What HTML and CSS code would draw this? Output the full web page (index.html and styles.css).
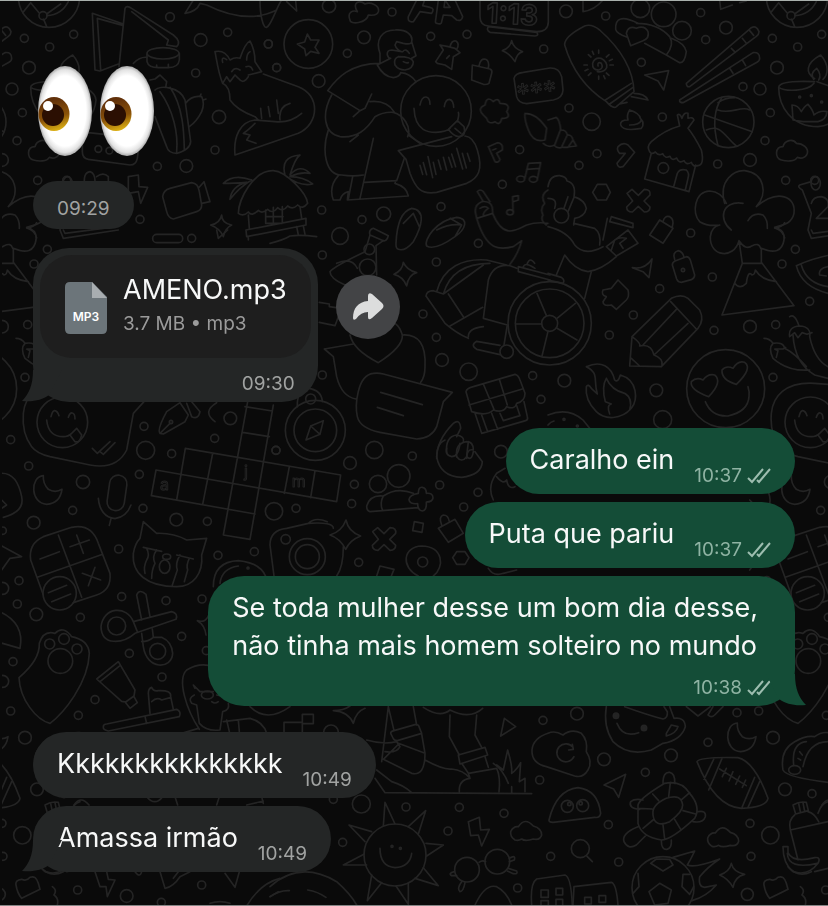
FILE: index.html
```html
<!DOCTYPE html>
<html lang="pt-BR">
<head>
  <meta charset="UTF-8">
  <meta name="viewport" content="width=device-width, initial-scale=1.0">
  <title>Chat</title>
  <link rel="stylesheet" href="styles.css">
</head>
<body>
  <!-- Doodle wallpaper, one 748px wide tile repeated sideways -->
  <svg class="wallpaper" aria-hidden="true">
    <defs>
      <path id="cross" d="M-34-22l15-12 19 18 18-18q20 0 17 17l-18 18 18 18q0 15-17 15l-18-17-18 17q-17 0-17-15l18-18z"/>
      <path id="moon" d="M130 107C90 110 90 190 140 193Q180 190 186 148 165 160 145 148 128 130 130 107z"/>
      <path id="cloud" d="M735 450Q720 440 722 425 730 408 745 410 765 380 790 408 815 415 815 435 810 452 790 447 765 455 755 447 745 453 735 450z"/>
      <g id="tile">
        <!-- ball, paper, lamp, cactus, fox, hut -->
        <g transform="scale(.33333)">
          <circle cx="147" cy="-10" r="92"/><circle cx="129" cy="47" r="12"/>
          <path d="M68 38L92 8l25 30M141 47Q185 45 205 5M131 58l9 22M140 42l42-30"/>
          <circle cx="73" cy="115" r="12"/><circle cx="149" cy="141" r="12"/><circle cx="221" cy="103" r="12"/><circle cx="87" cy="203" r="19"/><circle cx="36" cy="267" r="18"/><circle cx="67" cy="338" r="12"/><circle cx="51" cy="422" r="12"/><circle cx="510" cy="51" r="13"/><circle cx="602" cy="120" r="19"/><circle cx="683" cy="97" r="12"/><circle cx="805" cy="132" r="12"/><circle cx="830" cy="203" r="12"/><circle cx="587" cy="219" r="12"/><circle cx="657" cy="351" r="20"/><circle cx="645" cy="450" r="12"/><circle cx="472" cy="499" r="12"/><circle cx="559" cy="498" r="19"/><circle cx="113" cy="541" r="12"/><circle cx="200" cy="541" r="12"/><circle cx="420" cy="658" r="12"/>
          <path d="M370 72L277 40l8 170 15 3 57-22M368 76l-76-21 10 155M357 200L375 25q5-10 20 0l125 80q25 20 10 35l-30-5M395 35l110 85-5 15M400 190q20-20 40-18"/>
          <ellipse cx="489" cy="160" rx="48" ry="17"/><path d="M441 162v23q4 18 34 18h30q30 0 33-23v-20M470 195v8M505 193v8"/>
          <path d="M200 236C172 220 172 190 218 165 245 195 240 225 225 238M197 238Q185 220 206 205 222 225 212 240M92 262Q95 240 200 245M92 262C92 320 130 380 210 380 260 375 285 340 288 300 285 265 230 255 207 245M92 262C110 275 180 275 198 250M135 360l-3-45q18 0 28 20 10-17 20-22 15 17 18 32 17-15 39-10-2 25-27 30h-45z"/>
          <circle cx="155" cy="291" r="3"/><circle cx="190" cy="287" r="3"/><circle cx="221" cy="306" r="3"/>
          <path d="M100 480C80 475 80 440 105 440 110 420 135 415 145 430 165 430 182 445 178 460 172 478 155 475 148 472 140 485 118 485 100 480z"/>
          <path d="M247 415q3-17 18-17l138 15q15 2 15 15l-6 47q-4 20-22 20l-125-17q-18-3-18-23z"/><circle cx="295" cy="447" r="10"/><circle cx="328" cy="452" r="10"/>
          <path d="M465 270c15-15 75-10 90 30l17 125q-2 25-42 35-25 0-30-20l-35-90M480 275c40 55 55 125 50 180M510 262c40 58 42 138 43 188M557 310q18-25 48-20 10 20 0 45-15 30-37 45M450 240l15-3 15-12 20 20-3 17M600 290l3-8M610 300l8-3"/>
          <path d="M668 250C655 220 650 180 645 155 665 150 680 160 690 180q15-10 30-5 15-45 30-52 15 27 15 62l20 30-40 10M668 250l12-20 10 15 15-20 10 10q15 20 30-5M695 215q10-15 25-5M738 200q15-5 20 10M668 187q-5-20 12-8M740 180q0-20 10-25M668 250q22 10 22 50 20 30 75 50l10 10M785 355l-3-30M810 350l-5-30M835 340l-5-40M790 222l105 38C960 285 960 370 895 400L705 465C700 410 720 365 765 360l60 5Q870 370 905 340M840 360q-5-40 30-50M765 370q-20 20-35 30l20 5-10 15 28 10"/>
          <path d="M385 530l30-5 2 35 26 2-21 48-7-35-30 5zM488 590q2-20 22-25l65-17q20 2 23 27l7 40q0 15-15 20l-70 22q-15-2-20-22zM595 565l17-20 18 60-25 5M665 645q0 25 30 30-20 10-25 35-10-25-38-35 28-5 33-30M110 668q-5 12-30 16 25 7 30 30"/>
          <path d="M755 540q-55-20-85 10 30 0 70-3-45 11-50 51 30-38 65-58M715 640C715 600 760 510 820 512 860 515 920 580 923 610q-15 20-30 5-15 15-30 3-15 20-30 5-15 20-30 5-18 15-28 3-20 20-30 5-15 15-30 4M745 645l3 40M900 620l5 35M738 690l180-35v20l-178 35zM797 630v40h50v-50M820 622v45M797 650h52M890 680l5 25M910 678l5 25M745 710v10M855 525Q840 470 900 465 885 475 870 525 900 490 930 520 900 515 870 530 910 530 938 552 900 560 860 530"/>
          <path d="M255 560q-8-42 15-45 15 5 15 28M290 530q20-15 35 0v12M190 545l-35 10q-8 5 8 15l27 70-10 50 10 25 165-25M190 610q5-20 30-20 25 5 20 30l-35 35h35"/><ellipse cx="203" cy="550" rx="14" ry="20"/>
          <path d="M555 40L580 0M555 40Q590 35 600 10l20 5Q740 75 830 30M780 0c0 50 10 85 20 82 15-7 30-62 45-82"/>
        </g>
        <!-- badge, kneeling man, smiley, voice note -->
        <g transform="translate(270 0) scale(.33333)">
          <circle cx="177" cy="18" r="20"/><circle cx="366" cy="36" r="12"/><circle cx="-5" cy="132" r="12"/><circle cx="20" cy="203" r="12"/><circle cx="232" cy="160" r="12"/><circle cx="282" cy="112" r="19"/><circle cx="482" cy="109" r="12"/><circle cx="591" cy="103" r="12"/><circle cx="146" cy="243" r="19"/><circle cx="821" cy="147" r="12"/><circle cx="749" cy="449" r="12"/><circle cx="697" cy="553" r="12"/><circle cx="155" cy="630" r="12"/><circle cx="276" cy="659" r="12"/><circle cx="341" cy="642" r="21"/><circle cx="513" cy="620" r="12"/><circle cx="210" cy="708" r="25"/>
          <circle cx="115" cy="132" r="73"/><path d="M112 102l10 18 25 0-12 22 12 18-25-6-14 13-4-20-22-15 22-6z"/>
          <path d="M50 5l30 28-3-30M240 60C230 35 250 30 262 35 245 5 270 0 285 12 300 5 330 15 325 35 320 50 300 45 295 45 290 70 240 75 240 60zM415 50L440 0M430 65l20-30 35 5q10-15-5-18l-22-5 5-15M415 50q-3 18 15 15M500 70q-5 0-3-10l8-60M500 70q15 5 15-5l5-20 25 2 15 13q15 5 18-10L555 0M522 22l3-22 15 22z"/>
          <path d="M630 0v50q0 25 25 28l145 17q35 0 35-30V0M655 80l145 17q8 10-5 11l-135-11q-12-7-5-17"/>
          <text class="digits" x="648" y="68" transform="rotate(3 648 68)">1:13</text>
          <path d="M330 190v-30C315 120 335 90 375 90 410 88 430 105 425 125q0 10-25 5l-20-5-5 10q5 15 20 20l-30-5q-15 0-13 15 3 10 10 10l-40 20Q340 230 370 233q20-3 22-15 28 2 46 27M425 125l13 42-13 8M385 170q-15 5-10 25 10 15 30 15 25-5 25-25-5-15-45-15M400 185q8 5 15 3M398 155q10-12 20 5M330 190C240 190 200 235 173 272l97 60 15-7 20-43M270 332l-20 18M185 285c-30 55-25 115 25 125 50 5 80-20 105-60q25-15 55-13c30 8 55 43 43 73M300 305q50-5 72 30M240 425l25-20M175 390c-20 60-10 135 40 135q35 5 65 0M310 415l-40 180M283 547l97-5 23-67M205 527q-30 33-15 73h20q5-20 25-25l-3 25 183-12q-5-28-40-38l2-8M248 530l-13 67"/>
          <circle cx="498" cy="333" r="106"/><path d="M450 315q5-25 18-24 12 2 12 22M523 320q3-22 15-22 12 2 13 24M432 325c3 72 48 72 66 72q32-2 42-12M562 365q6-20 3-28M535 388l27-26 20 18q8 30-17 30-15-2-30-22M555 385l18 15M415 405l35 25"/>
          <path d="M385 452l160-42M585 408q25 2 37 42c18 60 3 85-32 100l-90 27c-50 8-65-17-80-57l-12-42-23-26M450 496l8 27M460 488l10 36M474 470l14 63M490 487l8 36M505 480l8 28M520 472l10 38M536 472l10 30M545 462l12 38M560 445l18 62M577 460l12 44M592 460l8 24"/>
          <path d="M497 185l23-35-10-15 25 5 20 5 15 13-20 12-5 38-20-13-23-5zM540 140q5-20 18-17 12 8 2 25M530 175l8-8M607 195l53 12q8 3 5 13l-8 30q-7 5-17 3l-35-13zM627 198q5-25 20-20 12 5 8 28M725 122q5 23 33 33-18 5-23 30-15-25-38-33 23-7 28-30"/>
          <path d="M732 235q3-15 28-18l80-13q28-1 35 26l4 40q-1 25-29 30l-80 11q-25-1-30-21z"/>
          <text class="stars" x="743" y="310" transform="rotate(-6 743 310)">***</text>
          <path d="M640 345q-20-20 5-30 5-30 25-10 15-15 20 5 35 0 20 25 15 20-15 20-5 25-20 10-20 10-25-10zM765 340q35 0 65 45l-5 35q-35 10-50-30-13-35-10-50M834 360l25-8Q869 360 872 388l-18 47q-20 10-34-5M874 390q15 0 18 15l-18 38q-15 2-20-6M894 405q12 0 15 15l-15 22h-15M909 420l10 18-25 3M655 440l27-12q18 2 15 22l-17 10 10 18q-5 12-15 7zM668 450l10-4"/>
          <path d="M764 537l11-47 37-2-10 50M770 508l38-3M729 637l-1-47 17-3v13l-15 5"/><ellipse cx="752" cy="537" rx="12" ry="9"/><ellipse cx="790" cy="538" rx="12" ry="9"/><ellipse cx="720" cy="637" rx="10" ry="8"/>
          <path d="M640 605l-18-30q8-10 18 0l20 30M618 645q-8-30 17-40 35-5 33 35l-48 15zM630 625q15-10 25 0-15 10-15 20M620 655c30 100 70 95 110 85l25-18q-10 38-35 71M668 640c32 80 72 50 102 35q30-10 64-5M834 570q-25 15-10 40-15 15-5 35-10 15 10 30"/>
        </g>
        <!-- sunscreen, chopsticks, house, basketball, tree -->
        <g transform="translate(548 0) scale(.33333)">
          <circle cx="54" cy="34" r="19"/><circle cx="173" cy="48" r="12"/><circle cx="458" cy="38" r="12"/><circle cx="473" cy="119" r="12"/><circle cx="534" cy="83" r="19"/><circle cx="280" cy="187" r="12"/><circle cx="63" cy="324" r="12"/><circle cx="343" cy="351" r="12"/><circle cx="131" cy="365" r="26"/><circle cx="147" cy="461" r="12"/><circle cx="93" cy="496" r="12"/><circle cx="585" cy="260" r="12"/><circle cx="509" cy="492" r="12"/><circle cx="606" cy="480" r="19"/><circle cx="428" cy="699" r="12"/>
          <path d="M105 0v35q35-5 60-35M515 0l3 28 35-13M575 8l20-5"/>
          <circle cx="277" cy="25" r="28"/><circle cx="347" cy="43" r="37"/><circle cx="402" cy="92" r="28"/>
          <path d="M270 70Q200 35 203 88q2 12 35 24M248 137l-13-37q5-25 30-15 25-10 35 10 5 20-15 27zM265 70q65 0 100 40 15 25-10 55l-65-35M370 115q40 15 45 40-5 35-20 33l-40-23"/>
          <path d="M50 135Q48 110 110 78 130 70 155 90C200 130 255 190 258 275l-53 45q-10 8-30-15C120 270 75 220 50 135M172 300l78-50M185 312l70-50M258 280q32 0 42 20l-50-10M215 312l22-5M150 198q-2-15 10-8 8 15-8 20-20 0-18-20 5-18 25-15 20 10 17 28-8 15-28 12M152 150v10M152 228v10M108 195h10M186 195h10M121 164l8 7M175 219l8 7M121 226l8-7M175 171l8-7M133 154l4 9M167 227l4 9M111 212l9-4M184 182l9-4"/>
          <path d="M290 225l72-13-15 58-17-27zM415 250L610 83q15-8 23 12 0 8-8 14L425 260q-10 2-10-10M395 300l220-142q20-3 20 17 0 8-8 12L405 308q-12 0-10-8M550 145l12 12M583 115l12 15M605 92l12 14M545 205l10 15M583 180l10 17M245 330q30 10 32 25 15 15 3 30-55 10-62-10-3-15 22-15-5-15 5-30M245 375q30 0 35-15"/>
          <path d="M305 455q-10-15 5-30 40-35 85-47l-7-33q7-7 14 10 6-20 18-15v15q15-5 18 5l-18 25q20 25 40 65 10 45-10 47-15 5-20-10-15 10-22-5-15 10-22-8-15 10-20-5-15 8-22-8-12 8-22-5-12 9-17-1M310 460l-20 77 133 38 20-80M377 560l11-40q7-15 27-10 10 10 5 25l-8 35"/><circle cx="346" cy="504" r="16"/>
          <circle cx="541" cy="366" r="77"/><path d="M470 345l143 50M522 292c-32 48-22 108-12 145M510 330c40 15 70-15 95 0M475 390c45-20 55 20 90 48M510 308q20-15 50-15"/>
          <path d="M210 440q15-15 30-5l20 22-35 43q-15 5-18-10l25-30h-17q-10-10-5-20M148 553h27l12 24-12 23h-27l-14-23z"/>
          <use href="#cross" x="271" y="602"/>
          <path d="M0 560q5-35 35-33 20 3 22 16 28 7 21 47 32 10 37 35-5 25-35 30l-3 20M60 590l-12 35M78 592l-18 43M0 595q30 0 20 30M77 670l63 15q20 15 15 50M165 720l13-65M190 650l65 20v13l-70-18zM335 660l40 25-30 45-40-25zM345 665q5-20 20-15 15 8 8 30"/><circle cx="40" cy="647" r="22"/>
          <path d="M530 610C510 540 560 510 590 512 650 520 660 580 625 620 690 565 745 590 738 640 730 675 700 675 680 682M535 610q-15-35-50-37C440 575 430 640 455 665q25 15 60 10M550 690C510 660 520 600 585 610M600 662q15-27 45-17 15 15 13 40M515 675q-25 5-28 35c-3 60 70 70 86 12l10 68h57v-45q60 25 68-25 4-30-28-38M573 722q20 30 40 15 20-10 25 8M583 790l-61 155 216-28-98-130M560 850q15 20 35 0 5-40 17-25 8 0 10-15 18 30 63 35"/>
        </g>
        <!-- pen nib, chat smiley -->
        <g transform="translate(0 230) scale(.33333)">
          <rect x="458" y="13" width="90" height="25" rx="12"/><circle cx="575" cy="25" r="12"/><circle cx="102" cy="102" r="12"/><circle cx="142" cy="58" r="12"/><circle cx="83" cy="284" r="12"/><circle cx="185" cy="214" r="12"/><circle cx="75" cy="442" r="12"/><circle cx="432" cy="589" r="12"/><circle cx="437" cy="661" r="27"/><circle cx="515" cy="671" r="12"/><circle cx="691" cy="565" r="19"/><circle cx="644" cy="625" r="12"/><circle cx="32" cy="629" r="12"/><circle cx="86" cy="708" r="12"/><circle cx="828" cy="661" r="12"/>
          <path d="M190 0l5 10 155-20M650 0l5 25 28-25M480 610q-10-10 20-65l40-27 25 37-10 20-65 37zM483 607l27-27M560 520l15 40q20 10 25-15l-25-30M645 575q-40-30 5-57"/><circle cx="513" cy="576" r="5"/>
          <path d="M432 515l-32 35-20 110q-30 60-110 45l-120-25q-40-10-55-30-30-40-25-100c5-50 40-95 130-90l40 3M153 560q5-20 12-18 8 2 12 15M205 562q5-15 12-13 8 2 8 18M140 570q5 50 50 50 15 0 25-10M210 615l20-20 15 20q-5 25-20 20zM277 655l15 15 38-35M300 665l10 8 35-35"/><circle cx="187" cy="577" r="76"/>
        </g>
        <!-- potion, heart chat, scooter, basket, compass -->
        <g transform="translate(270 220) scale(.33333)">
          <circle cx="157" cy="105" r="12"/><circle cx="499" cy="126" r="12"/><circle cx="625" cy="70" r="12"/><circle cx="459" cy="282" r="12"/><circle cx="499" cy="352" r="12"/><circle cx="516" cy="420" r="19"/><circle cx="596" cy="455" r="26"/><circle cx="788" cy="467" r="12"/><circle cx="813" cy="538" r="12"/><circle cx="157" cy="465" r="12"/><circle cx="18" cy="691" r="12"/>
          <path d="M378 70C380 20 390-25 425-35 470-30 455 20 430 65q-25 30-45 23-8-3-7-18M400 10l30-30 18 40M470 78C460 60 500 0 560-8 600-5 585 30 555 50 520 75 490 90 470 78M500 30q40-20 75-15M540-5l35 20-20 35"/>
          <path d="M300 45q-5-15 10-20l45 22q-5 18-15 15zM300 45l-15 50Q190 140 180 155q0 20 45 40M340 62l-22 15 2 88M200 130q45-20 62 15M400 127q10 23 40 31-25 7-30 40-10-28-38-35 26-13 28-36M0 70q40-10 60-22 30-5 80 2M148 247l30 5v8l20 3M148 307l47 10 10-27"/><circle cx="298" cy="88" r="16"/><circle cx="293" cy="142" r="25"/>
          <path d="M500 215C520 140 580 115 650 120l60 15M520 222C540 150 600 130 660 130M468 228q2-16 22-16l30 10 120-87M468 228l57 82q35 30 70 45M535 222l45 68M540 318l98-56M640 295l15-115q15-50 65-43l20 8M640 295l72 20M595 350q0-25 45-30M690 376l-70-12q-20 12 0 24l70 16M712 315l-10 60M840 180l-95-25v-15l95 25M760 140q5-15 35 5M772 130q8-20 22 0"/><circle cx="710" cy="395" r="20"/>
          <path d="M163 387l87-15M163 387l27 23 10 60q15 60 58 67M240 345q10 45 85 83 75-48 72-83-7-25-22-35M397 345q73-5 68 95 0 30-13 47M310 460c-50 5-55 100-48 130q8 35 68 47l110 20q45-2 60-37l20-75 27-28-207-55q-15-4-30-2M332 517l125 37M322 562l78 25"/>
          <path d="M588 515q2-10 22-15l125-37q10 2 15 17l15 40q0 25-25 30-5 20-30 10-10 20-40 10-20 20-65 5zM640 492l32 76M688 478l24 77M597 555l160-48M615 580l20 60 132-38q8-3 5-12l-10-45M635 585l18 50M665 580l18 48M690 580l10 22 50-15-10-30"/>
          <circle cx="136" cy="631" r="90"/><circle cx="136" cy="631" r="64"/><circle cx="122" cy="537" r="15"/><path d="M108 660l14-42 38-16-10 41zM122 618l28 25M82 560q-2-50 33-55 40 5 42 40"/>
          <path d="M500 715q0-55 50-105 20-15 22 15l-12 25M530 700q-5-50 30-55 25 5 20 20M560 710q-5-40 30-45 20 0 20 25M590 715q0-30 20-25"/>
        </g>
        <!-- wheel, pencil, fire, heart eyes, peppers -->
        <g transform="translate(548 220) scale(.33333)">
          <circle cx="493" cy="171" r="12"/><circle cx="335" cy="206" r="12"/><circle cx="256" cy="285" r="12"/><circle cx="184" cy="345" r="12"/><circle cx="498" cy="331" r="12"/><circle cx="606" cy="320" r="19"/><circle cx="49" cy="482" r="19"/><circle cx="325" cy="511" r="19"/><circle cx="344" cy="599" r="27"/>
          <path d="M253 143q37 7 59-26l-9 56-18-18zM373 135q0-8 8-12l34-13q8 0 12 10l13 45q0 10-10 14l-30 8q-10 0-14-10zM380 118q-8-20 10-26 15 3 18 20"/><circle cx="405" cy="150" r="5"/>
          <path d="M165 210l25-5 20-25 30 30q5 20-5 30l-30 28-15-13q-25 5-25-10l10-15q-17-5-10-20M175 80l65-50 30 40-65 38zM190 90l10-30q15-10 35-5l-20 15 10 15M0 20q60 15 80 55 30 35 85 5M0 160l40 12q12 8 5 18l-45-10M25 165l25-60q30 45 70 50 40-5 85-45M130 155l-20 80"/>
          <circle cx="5" cy="310" r="125"/><circle cx="5" cy="310" r="103"/><circle cx="5" cy="310" r="24"/><path d="M27 295l55-45M27 325l60 35M-19 312h-78M-5 286l-28-66M0 334l-18 74"/>
          <path d="M245 438l7-88 118-115q30-15 50 0l35 35q15 30-5 55L340 440zM368 245l77 82M285 375l103-110M318 405l102-95M252 350q28 20 23 28 35-8 43 27 27 10 24 30M250 415l25 23"/>
          <circle cx="533" cy="506" r="117"/><path d="M482 530q-57-20-52-45 15-15 35-5 15-20 35-15 25 20-18 65M565 493q-45-13-43-43 13-15 33-5 15-25 35-18 25 18-25 66M472 545q18 45 68 43 60-13 63-58 2-15-3-30"/>
          <path d="M115 440C160 420 190 440 200 480q10 10 17-15c53 15 53 75 33 100-30 35-80 35-105 10q-35-35-30-75 5-10 15 5l18 17c-13-42 7-62-33-82M175 475q15 35 55 45 25 15 15 50M175 475q-15 25-3 70l18 7q-15 3-5 30"/>
          <path d="M845 105q-50 10-100 32 15 63 95 83M760 135q15 55 80 65M840 140q-30 5-25 25l20 3M725 290q15-10 27 25M725 350q-5-30 30-32 35 2 30 32 15 70 55 90M735 345q5 85 65 120l40 10M725 350l15-12 10 15 12-15 15 5 15-5M648 355q17 0 27 15-15 15 0 45 45 40 110 35M675 370q30-5 35 15 30 15 65 55M685 412l5-20-10-5h25l8-5"/>
          <path d="M0 585q60-25 105 15l20 25M0 615q8-10 18-12"/><circle cx="48" cy="598" r="3"/><circle cx="88" cy="618" r="3"/>
        </g>
        <!-- crossword, calculator, cat, scissors, paw, cake -->
        <g transform="translate(0 440) scale(.33333)">
          <circle cx="249" cy="126" r="20"/><circle cx="418" cy="103" r="12"/><circle cx="218" cy="211" r="12"/><circle cx="101" cy="248" r="19"/><circle cx="429" cy="205" r="12"/><circle cx="529" cy="239" r="19"/><circle cx="622" cy="244" r="12"/><circle cx="822" cy="214" r="26"/><circle cx="356" cy="327" r="12"/><circle cx="654" cy="346" r="12"/><circle cx="763" cy="335" r="12"/><circle cx="57" cy="422" r="12"/><circle cx="52" cy="492" r="12"/><circle cx="109" cy="523" r="19"/><circle cx="365" cy="470" r="12"/><circle cx="498" cy="482" r="12"/><circle cx="606" cy="477" r="12"/><circle cx="241" cy="532" r="12"/><circle cx="545" cy="589" r="12"/><circle cx="388" cy="640" r="12"/><circle cx="619" cy="632" r="12"/><circle cx="39" cy="665" r="12"/><circle cx="486" cy="711" r="12"/><circle cx="285" cy="779" r="12"/><circle cx="32" cy="813" r="12"/><circle cx="235" cy="826" r="12"/><circle cx="75" cy="893" r="19"/><circle cx="8" cy="272" r="11"/><circle cx="8" cy="445" r="18"/><circle cx="8" cy="724" r="18"/>
          <path d="M743-115L670 285l80 13 70-403M735-100l82 13M728-23l80 13M556 25l466 80-12 80L468 90l-14 77 311 55M556 25l-26 155M638 40l-30 153M868 80l-15 80M945 93l-13 80"/>
          <text class="letter" x="480" y="150">a</text><text class="letter" x="732" y="110">j</text><text class="letter" x="875" y="140">m</text>
          <use href="#moon"/>
          <rect x="325" y="105" width="52" height="107" rx="26" transform="rotate(8 350 158)"/><path d="M295 175q5 55 50 61 35-6 48-41M333 236l-5 20"/>
          <path d="M130 465L92 360q-7-50 38-70l85-28q60-12 80 48l35 90q5 50-40 65l-70 23M175 285l70 187M112 412l196-69M120 357l58-22M210 320l58-20M230 285l20 55M247 400l55 20M285 382l-20 55M145 458l55-22M155 485l57-23"/><circle cx="179" cy="460" r="50"/>
          <path d="M430 245l40 35q50-2 90 20l60-5-15 50c5 55-25 95-75 95-90 0-135-40-130-100q5-30 20-45zM430 322l55 12M530 345l50 12M440 325q10 20 0 35-10 20-5 40M470 330q-15 20-5 40-10 20-10 45M540 345q-15 25-8 45l-15 45M568 355q-10 20-5 35l-10 35"/><ellipse cx="494" cy="380" rx="16" ry="20"/><ellipse cx="500" cy="350" rx="12" ry="8"/>
          <path d="M425 540l-15-75q8-20 28-2l12 67M400 545l115-30q20 5 13 23l-123 42c-35 30-100 40-102-20 7-60 77-65 97-15M400 545l12 30M425 580l5 40c10 70 85 70 88 20q-3-35-33-48h-25l-3-25M425 605q20 0 35-13"/><circle cx="350" cy="558" r="27"/><circle cx="473" cy="634" r="24"/>
          <path d="M57 713q63-53 61-103 12-40 47-30 25-25 50 10 50 10 53 50C265 730 190 820 150 850 110 840 60 780 57 713"/><circle cx="181" cy="663" r="37"/><circle cx="149" cy="612" r="15"/><circle cx="192" cy="597" r="16"/><circle cx="231" cy="627" r="15"/>
          <path d="M290 717l65-52 50 85-3 18-25 18-12-2zM300 725l60-48M377 788l13 17 22-17-10-18M310 860q0-8 10-8l210-44q15 7 8 22l-213 43q-17-3-15-13M435 830l5 20M450 820l-5-60q0-15 10-18 5 13 20 10 40-2 37 18l8 38M455 785q15-15 30-5l28-8"/>
          <path d="M598 868C560 810 530 720 560 690q40-25 80-10M585 745l-5-10 20 20h40M650 765q20 5 25-5M583 765q-20 10-8 25l15 5 8 55q22 25 62 20l8-55q22-5 17-25M635 785q10 8 20 0M670 845l80-10q40 10 50 45M715 840l3 35M680 840l8 35M545 880l50-15M750 800q50 50 120 0"/><ellipse cx="622" cy="765" rx="18" ry="12"/>
          <path d="M640 440q0-75 75-78 75 8 85 58M660 430q5-45 55-52M592 542q28 8 36-22M592 542q23 13 26 43M0 100q50-5 65 70 10 45-55 62M5 180l15 15-18 12M0 315l65 35-35 5-25 35M0 515q75 35 60 110L0 608"/><circle cx="744" cy="384" r="3"/>
        </g>
        <!-- camera, contacts, map pin -->
        <g transform="translate(200 440) scale(.33333)">
          <circle cx="450" cy="69" r="19"/><circle cx="523" cy="30" r="26"/><circle cx="637" cy="48" r="12"/><circle cx="463" cy="133" r="12"/><circle cx="455" cy="191" r="12"/><circle cx="288" cy="205" r="12"/><circle cx="719" cy="135" r="12"/><circle cx="834" cy="157" r="12"/><circle cx="791" cy="201" r="12"/><circle cx="476" cy="367" r="12"/><circle cx="903" cy="35" r="19"/>
          <circle cx="534" cy="132" r="26"/><circle cx="596" cy="108" r="34"/><path d="M640 160q-50-20-90 8-40-5-50 30 0 15 10 17l145-12M550 168q-12 22-2 44M655 160q0-20 12-18 12 2 12 18 20-2 20 14-2 12-20 12 2 25-12 27-14-2-14-22-25 2-26-12 2-15 28-19"/>
          <path d="M222 408l-12-93q0-45 50-50l65-15q75-5 75 15M325 250q20-20 57-5M430 320q0 60-20 88M438 240q7 35 44 48-32 12-45 40-17-33-47-43 35-10 48-45"/><circle cx="322" cy="350" r="54"/><circle cx="322" cy="350" r="36"/><circle cx="257" cy="298" r="14"/>
          <use href="#cross" x="552" y="297"/>
          <path d="M643 245l27 5-4 27-28-5zM530 408l10-30 42 10-8 20M715 265l50-27 25 42-45 27zM725 255q-10-25 5-30 15 0 18 20M655 408C600 380 610 320 665 318 730 320 735 380 700 408M770 335h25l12 18-12 20h-25l-12-20z"/><circle cx="668" cy="366" r="15"/>
          <path d="M735 0q-25 10-25 50 10 60 75 62 60-7 62-47l-22-30M740 25q-5 20 15 25 20 0 25-40M770 50q15 20 30 0l5-45M800 50q15 15 20-15M880 180q-20-40 10-80l25-15M890 110q20 25 30 10 5 30 25 20M865 385q15 25 45 15l40-10"/>
        </g>
        <!-- bolts along the bottom edge -->
        <g transform="translate(0 700) scale(.33333)">
          <path d="M285 515l15 45h18l4 30 23-50-20-2-5-23M480 515l15 50q25-5 45-35l30-15M520 535l15-20M675 520l30 42 13-47M740 618q40-68 100-83M810 590l25-15M405 515q15 20 20 0M630 610q30-10 60 0M120 500q30 35 70 15M222 315q20-30 45 0M440 290q25 30 48 0M525 290l8 25M650 315l8-25M740 315l50-12M785 290l5 20"/>
          <circle cx="233" cy="570" r="12"/><circle cx="380" cy="588" r="19"/><circle cx="484" cy="607" r="12"/><circle cx="605" cy="555" r="12"/>
        </g>
        <!-- hiker, sun, glasses -->
        <g transform="translate(270 690) scale(.33333)">
          <circle cx="819" cy="91" r="12"/><circle cx="809" cy="270" r="12"/><circle cx="274" cy="342" r="27"/><circle cx="408" cy="351" r="12"/><circle cx="568" cy="352" r="12"/><circle cx="702" cy="370" r="12"/><circle cx="534" cy="423" r="12"/><circle cx="218" cy="457" r="12"/><circle cx="743" cy="594" r="12"/><circle cx="183" cy="127" r="22"/><circle cx="190" cy="328" r="12"/><circle cx="842" cy="499" r="12"/>
          <path d="M97 73h33v28H97zM42 125V97h55v28M190 62q30 0 50-14M190 62q45 3 60 38 8-35 35-45"/>
          <path d="M355 50l-20 165M355 50l17 72M440 105l-10-55M362 130q0-6 10-8l63-18q10-2 12 6l8 20-73 22q-10 0-13-8zM385 160l80 30M455 132l10 58q0 70-40 60l-85-42 45-45M290 150q50 15 90 5l10 15q-10 20-45 15M465 210q55 30 80 27 35 3 55 28M320 240l45 35q35 10 60 33M315 265l30 43 440 3M460 52q50 33 80 8 60 30 98-5M540 75l-2 65 30 55M620 75l-5 60 20 37M565 195l80-23 8 23-83 27zM575 220l20 30M645 200l10 32M568 305q-3-35 32-40l-5-15 85-15q12 25 7 70M670 220q30 20 45 60M680 225l20 15 13-60q15 50 12 70 15-10 27-32l-4 57 17-10v40M725 290v18M703 85l34 25-45 28z"/>
          <circle cx="375" cy="495" r="93"/><circle cx="366" cy="469" r="3"/><circle cx="391" cy="475" r="3"/>
          <path d="M330 475q0 55 45 58 45-3 50-43M340 408l5-71 30 65M415 410l52-48-22 70M468 460l52 5-50 33M460 533l45 54-70-22M415 580v63l-37-55M335 578l-43 54 13-77M290 525h-70l63-33M285 455l-48-50 68 20"/>
          <path d="M595 395l33-13 4 38 26-2-23 50-10-33-23 2z"/>
          <use href="#cloud"/>
          <circle cx="591" cy="539" r="37"/><circle cx="682" cy="515" r="37"/><path d="M627 517q10-8 20-2M575 575q-15 20-5 30 10 0 15-27M553 545q-20 5-8 12h15M718 505q20-12 15 5l-15 5M715 535l25 8q5 10-10 8l-18-8"/>
          <path d="M0 590q90-80 200-15 40 35 60 70M0 620q30-20 58-18M113 600q30 5 55 22M615 645q30-65 65-55 30 15 45 55M785 645q-5-65 15-78l85-12q18 5 22 90M813 600h22v22h-22zM813 632h22v22h-22z"/>
        </g>
        <!-- cup, football, turtle, soccer ball, taco -->
        <g transform="translate(548 690) scale(.33333)">
          <circle cx="87" cy="71" r="19"/><circle cx="567" cy="68" r="12"/><circle cx="480" cy="157" r="12"/><circle cx="168" cy="208" r="19"/><circle cx="369" cy="196" r="19"/><circle cx="292" cy="247" r="12"/><circle cx="181" cy="404" r="12"/><circle cx="212" cy="516" r="12"/><circle cx="606" cy="400" r="12"/><circle cx="609" cy="499" r="12"/><circle cx="598" cy="613" r="18"/><circle cx="711" cy="298" r="19"/><circle cx="792" cy="311" r="12"/><circle cx="667" cy="436" r="26"/>
          <path d="M0 130q20-10 45 5 25-20 55-5 20 20 15 55 20 30 5 55-15 25-40 18l-85-28Q-50 220-48 180-45 145 0 130M75 172a27 27 0 1 0 3 28M76 178l-14 2M76 178l-3-15"/>
          <path d="M175 50q-10 60 20 105 45 45 115 25l35-20q55-10 67-50-2-30-34-25l-13-35M230 50q70 25 115 37 15-2 13-22l-10-15M355 130l15-25 20 5q-5 20-35 28zM207 100q18 45 65 28M415 50l35 28 37-28M495 50l-15 25q10 10 20 0l25-25"/><circle class="dot" cx="204" cy="77" r="8"/><circle class="dot" cx="288" cy="114" r="8"/>
          <use href="#moon" x="438" y="-8"/><use href="#cloud" x="-243" y="19"/>
          <path d="M447 215q8-15 123-12 50 12 90 122-5 27-80 30-80-5-133-140M497 208l-29 60M522 205l-40 95M620 262l-38 90M635 275l-35 77M515 237l80 50M535 235l-12 25M555 245l-12 28M575 258l-12 25M593 270l-10 22"/>
          <path d="M840 277q-125-15-135-37-10-60 35-85 35-20 60-15 20-15 40-12M737 225q-7-65 38-70M765 230q15-75 75-75M755 185l8 10M750 205l8 5M168 285l65-32-21 69-15-25zM3 390q22-90 87-97 60 7 68 77-3 15-18 12L15 397q-13 0-12-7"/><ellipse cx="740" cy="240" rx="18" ry="13"/><circle cx="58" cy="349" r="18"/><circle cx="104" cy="347" r="18"/><circle cx="64" cy="342" r="5"/><circle cx="98" cy="340" r="5"/>
          <path d="M270 345q5-20 80-65 50-10 75 30 35 40 15 75-70 65-100 65-60-10-70-50zM315 375q-5-30 40-50 45-15 49 20 1 20-39 50-45 20-50-20M362 320l5-42M400 330l25-22M405 362l38 10M380 388l18 30M345 405l5 42M315 390l-30 25M312 357l-40-2M332 332l-18-20M345 280q0-35 20-33 17 3 15 33M275 358q-35-3-27-23 12-10 37-5M450 365q25-5 22 15-7 20-37 15M340 452q0 28 17 26 15-3 13-28M270 410q-50 20-42 45 12 25 37 10l30-30M115 497l18 18"/><circle cx="97" cy="476" r="27"/>
          <path d="M735 345q20-12 40-8l6 25-38 10zM752 340l5 25M765 338l5 25M740 375q-20 15-13 45l23 90M780 365q20 5 32 30M727 420l113-25M810 370q10-30 30-35M800 545l40-10M705 470h15v18q15 32 80 15 20-3 10 17-30 40-75 25-30-25-30-75M718 490q2 50 90 30"/>
          <circle cx="345" cy="593" r="93"/><path d="M303 605l32-25 35 20-10 40-40 5zM308 520l17-13 40 1 10 17-30 18zM425 553h-20l-3 37 23 23 12-23M270 550l3 40-18 20M375 502l65-19q-10 22-22 42 22 10 97-18-35 23-60 53-5 30 15 32l35-7q-30 35-73 47M550 520q5 25 40 33-30 7-35 39-15-27-40-37 30-10 35-35M648 585q-3-15 17-17 15 7 25-6 18-7 25 18l5 18-55 27q-13-15-17-40M757 590q15 10 5 25 15 10 10 30"/>
          <path d="M75 645l3-55 112-13q15 3 20 68M24 595h20v20H24zM24 645v-17h20v17M110 622h20v20h-20zM153 617h20v20h-20z"/>
        </g>
      </g>
    </defs>
    <use href="#tile" x="-748"/>
    <use href="#tile"/>
    <use href="#tile" x="748"/>
    <use href="#tile" x="1496"/>
  </svg>

  <main class="chat">
    <article class="message emoji-message">
      <svg class="emoji" viewBox="0 0 118 92" role="img" aria-label="👀">
        <defs>
          <radialGradient id="white" cx="50%" cy="50%" r="50%">
            <stop offset=".78" stop-color="#fff"/>
            <stop offset=".92" stop-color="#e2e2e2"/>
            <stop offset="1" stop-color="#a8a8a8"/>
          </radialGradient>
          <linearGradient id="iris" x1=".35" y1="0" x2=".6" y2="1">
            <stop offset=".1" stop-color="#61300a"/>
            <stop offset=".6" stop-color="#8a5208"/>
            <stop offset="1" stop-color="#e0b414"/>
          </linearGradient>
          <g id="eye">
            <ellipse cx="27" cy="46" rx="27" ry="45" fill="url(#white)"/>
            <ellipse cx="16" cy="49" rx="15.5" ry="17" fill="url(#iris)"/>
            <circle cx="15" cy="50" r="11" fill="#2b0f02"/>
            <circle cx="10" cy="41" r="5" fill="#fff"/>
          </g>
        </defs>
        <use href="#eye"/>
        <use href="#eye" x="62"/>
      </svg>
      <div class="bubble time-only"><time>09:29</time></div>
    </article>

    <article class="message file-message">
      <div class="bubble file-bubble">
        <a class="file" href="#">
          <svg class="file-icon" viewBox="0 0 42 52" aria-hidden="true">
            <path d="M5 0h22l15 15v32q0 5-5 5H5q-5 0-5-5V5q0-5 5-5z" fill="#6c757a"/>
            <path d="M27 0l15 16H27z" fill="#a9aeb1"/>
            <text x="21" y="39" text-anchor="middle">MP3</text>
          </svg>
          <span class="file-info">
            <span class="file-name">AMENO.mp3</span>
            <span class="file-meta">3.7 MB • mp3</span>
          </span>
        </a>
        <time>09:30</time>
        <svg class="tail" viewBox="0 0 40 32" aria-hidden="true"><path d="M11 0C11 15 7 24 0 31 12 32 20 30 27 25L40 0z"/></svg>
      </div>
      <button class="forward" type="button" aria-label="Encaminhar">
        <svg viewBox="0 0 32 28" aria-hidden="true"><path d="M16 3v5C6 9 1 15 1 25q0 3 3 1 5-7 12-7v5q0 4 4 1l10-9q3-3 0-6L20 1q-4-2-4 2z"/></svg>
      </button>
    </article>

    <div class="group sent">
      <article class="bubble line">
        <p>Caralho ein</p>
        <span class="status"><time>10:37</time><svg class="checks" viewBox="0 0 24 16" aria-label="Lida"><path d="M1 10l4 4L16 1M10 12l2 2L23 1"/></svg></span>
      </article>
      <article class="bubble line">
        <p>Puta que pariu</p>
        <span class="status"><time>10:37</time><svg class="checks" viewBox="0 0 24 16" aria-label="Lida"><path d="M1 10l4 4L16 1M10 12l2 2L23 1"/></svg></span>
      </article>
      <article class="bubble long">
        <p>Se toda mulher desse um bom dia desse,<br>não tinha mais homem solteiro no mundo</p>
        <span class="status"><time>10:38</time><svg class="checks" viewBox="0 0 24 16" aria-label="Lida"><path d="M1 10l4 4L16 1M10 12l2 2L23 1"/></svg></span>
        <svg class="tail" viewBox="0 0 40 32" aria-hidden="true"><path d="M11 0C11 15 7 24 0 31 12 32 20 30 27 25L40 0z"/></svg>
      </article>
    </div>

    <div class="group">
      <article class="bubble line">
        <p>Kkkkkkkkkkkkkkk</p>
        <span class="status"><time>10:49</time></span>
      </article>
      <article class="bubble line">
        <p>Amassa irmão</p>
        <span class="status"><time>10:49</time></span>
        <svg class="tail" viewBox="0 0 40 32" aria-hidden="true"><path d="M11 0C11 15 7 24 0 31 12 32 20 30 27 25L40 0z"/></svg>
      </article>
    </div>
  </main>
</body>
</html>
```
FILE: styles.css
```css
* {
  box-sizing: border-box;
}

body {
  margin: 0;
  background-color: #0a0a0a;
  color: #f7f8f8;
  font-family: Inter, "Liberation Sans", sans-serif;
  font-size: 27px;
  line-height: 38px;
}

p {
  margin: 0;
}

time {
  color: #a1a3a2;
  font-size: 19px;
  line-height: 24px;
}

/* Wallpaper */
.wallpaper {
  position: fixed;
  top: 0;
  left: 0;
  z-index: -1;
  width: 100%;
  height: 100%;
  clip-path: inset(0 0 0 2px);
  fill: none;
  stroke: #242424;
  stroke-width: 5px;
  stroke-linecap: round;
  stroke-linejoin: round;
}

.wallpaper .dot {
  fill: #242424;
}

.wallpaper .digits {
  font-size: 84px;
  font-weight: bold;
}

.wallpaper .stars {
  font-size: 80px;
  stroke-width: 3px;
}

.wallpaper .letter {
  font-size: 48px;
  stroke-width: 3px;
}

/* Chat column */
.chat {
  display: flex;
  flex-direction: column;
  gap: 26px;
  min-height: 100vh;
  padding: 64px 33px 33px;
  border-top: 1px solid #a9b0ac;
  border-bottom: 1px solid #858585;
}

.message,
.group {
  display: flex;
  flex-direction: column;
  align-items: flex-start;
}

.group {
  gap: 8px;
}

/* Bubbles */
.bubble {
  position: relative;
  background-color: #242626;
  border-radius: 36px;
}

.line {
  display: flex;
  align-items: flex-end;
  gap: 20px;
  padding: 13px 24px 6px;
}

.line p {
  margin-bottom: 9px;
}

.long {
  display: flex;
  flex-direction: column;
  gap: 11px;
  padding: 13px 37px 6px 24px;
}

.status {
  display: flex;
  align-items: center;
  align-self: flex-end;
  gap: 5px;
}

.long .status {
  margin-right: -13px;
}

.tail {
  position: absolute;
  bottom: 0;
  left: -11px;
  width: 40px;
  height: 32px;
  fill: #242626;
}

/* Sent messages */
.sent {
  align-items: flex-end;
}

.sent .bubble {
  background-color: #144d37;
}

.sent time {
  color: #8fb3a3;
}

.sent .tail {
  right: -11px;
  left: auto;
  fill: #144d37;
  transform: scaleX(-1);
}

.checks {
  width: 24px;
  height: 16px;
  fill: none;
  stroke: #9dbdaf;
  stroke-width: 2px;
}

/* Emoji message */
.emoji-message {
  gap: 24px;
  margin-bottom: -7px;
}

.emoji {
  width: 118px;
  height: 92px;
  margin-left: 5px;
}

.time-only {
  display: flex;
  padding: 16px 24px 8px;
}

/* File message */
.file-message {
  flex-direction: row;
  gap: 18px;
}

.file-bubble {
  display: flex;
  flex-direction: column;
  gap: 14px;
  padding: 7px 7px 6px;
}

.file-bubble time {
  align-self: flex-end;
  margin-right: 16px;
}

.file {
  display: flex;
  align-items: flex-end;
  gap: 16px;
  padding: 16px 24px 22px 25px;
  border-radius: 32px;
  background-color: #1e1e1e;
  color: inherit;
  text-decoration: none;
}

.file-icon {
  width: 42px;
  height: 52px;
  margin-bottom: 2px;
}

.file-icon text {
  fill: #ffffff;
  font-size: 12px;
  font-weight: 600;
}

.file-info {
  display: flex;
  flex-direction: column;
  gap: 3px;
}

.file-meta {
  color: #9b9b9b;
  font-size: 19px;
  line-height: 24px;
}

/* Forward button */
.forward {
  display: flex;
  align-items: center;
  justify-content: center;
  width: 64px;
  height: 64px;
  margin-top: 27px;
  padding: 0;
  border: none;
  border-radius: 50%;
  background-color: #434446;
  cursor: pointer;
}

.forward svg {
  width: 32px;
  height: 28px;
  fill: #dcdddd;
}
```
